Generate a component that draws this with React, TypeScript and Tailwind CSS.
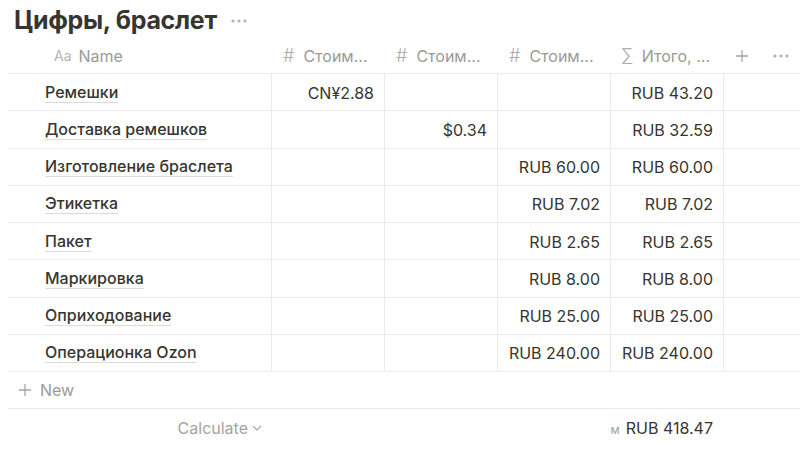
const rows = [
  { name: "Ремешки", a: "CN¥2.88", b: "", c: "", total: "RUB 43.20" },
  { name: "Доставка ремешков", a: "", b: "$0.34", c: "", total: "RUB 32.59" },
  { name: "Изготовление браслета", a: "", b: "", c: "RUB 60.00", total: "RUB 60.00" },
  { name: "Этикетка", a: "", b: "", c: "RUB 7.02", total: "RUB 7.02" },
  { name: "Пакет", a: "", b: "", c: "RUB 2.65", total: "RUB 2.65" },
  { name: "Маркировка", a: "", b: "", c: "RUB 8.00", total: "RUB 8.00" },
  { name: "Оприходование", a: "", b: "", c: "RUB 25.00", total: "RUB 25.00" },
  { name: "Операционка Ozon", a: "", b: "", c: "RUB 240.00", total: "RUB 240.00" },
];

const Dots = () => (
  <svg width="16" height="4" viewBox="0 0 16 4" className="fill-[#b4b3b0]">
    <circle cx="2" cy="2" r="1.6" />
    <circle cx="8" cy="2" r="1.6" />
    <circle cx="14" cy="2" r="1.6" />
  </svg>
);

const Plus = ({ size = 14 }: { size?: number }) => (
  <svg width={size} height={size} viewBox="0 0 14 14" className="stroke-[#a5a4a1]" strokeWidth="1.3">
    <path d="M7 1v12M1 7h12" />
  </svg>
);

const NumHead = ({ icon, label }: { icon: string; label: string }) => (
  <div className="w-[113px] flex items-center gap-[9px] pl-3 text-[#9b9a97]">
    <span className="text-[18px] font-light text-[#aeada9]">{icon}</span>
    <span>{label}</span>
  </div>
);

const Cell = ({ v }: { v: string }) => (
  <div className="w-[113px] h-full border-l border-[#ebebea] flex items-center justify-end pr-[10px] pt-[1px]">
    {v}
  </div>
);

export default function App() {
  return (
    <div className="w-[800px] h-[449px] overflow-hidden bg-white text-[#37352f] text-[16px] font-['Inter',sans-serif]">
      <div className="flex items-center gap-[14px] pl-[14px] pt-[4px] h-[38px]">
        <h1 className="text-[25px] font-bold tracking-[-0.3px]">Цифры, браслет</h1>
        <Dots />
      </div>

      <div className="ml-2">
        <div className="flex h-[36px] items-center border-b border-[#ebebea]">
          <div className="w-[263px] flex items-center gap-[7px] pl-[46px] text-[#9b9a97]">
            <span className="text-[14px] text-[#b4b3b0]">Aa</span>
            <span>Name</span>
          </div>
          <NumHead icon="#" label="Стоим..." />
          <NumHead icon="#" label="Стоим..." />
          <NumHead icon="#" label="Стоим..." />
          <NumHead icon="∑" label="Итого, ..." />
          <div className="flex items-center gap-[24px] pl-[12px]">
            <Plus />
            <Dots />
          </div>
        </div>

        {rows.map((r) => (
          <div key={r.name} className="flex h-[37.25px] border-b border-[#ebebea]">
            <div className="w-[263px] flex items-center pl-[37px] pt-[1px]">
              <span className="font-medium border-b border-[#dcdbd8] leading-[19px]">{r.name}</span>
            </div>
            <Cell v={r.a} />
            <Cell v={r.b} />
            <Cell v={r.c} />
            <Cell v={r.total} />
            <div className="w-[77px] h-full border-l border-[#ebebea]" />
          </div>
        ))}

        <div className="flex h-[37px] items-center gap-[8px] pl-[10px] border-b border-[#ebebea] text-[#9b9a97]">
          <Plus />
          <span>New</span>
        </div>

        <div className="flex h-[38px] items-center">
          <div className="w-[263px] flex items-center justify-end gap-1 pr-[9px] text-[#a5a4a1]">
            <span>Calculate</span>
            <svg width="10" height="6" viewBox="0 0 10 6" className="stroke-[#a5a4a1] fill-none" strokeWidth="1.1">
              <path d="M1 1l4 4 4-4" />
            </svg>
          </div>
          <div className="w-[339px]" />
          <div className="w-[113px] flex items-baseline justify-end gap-[6px] pr-[10px] overflow-hidden">
            <span className="text-[12px] text-[#a5a4a1]">м</span>
            <span>RUB 418.47</span>
          </div>
        </div>
      </div>
    </div>
  );
}
